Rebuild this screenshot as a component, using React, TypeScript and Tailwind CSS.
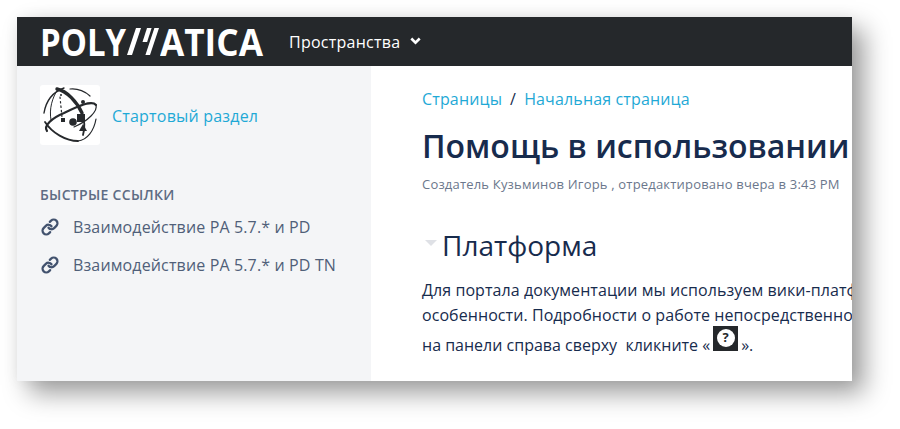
import { Link as LinkIcon } from "lucide-react";

function Logo() {
  return (
    <div className="flex h-[30px] w-[223px] items-center text-[37px] font-bold leading-none text-white font-['Open_Sans',sans-serif]">
      <div className="w-[86px]">
        <span className="inline-block origin-left scale-x-[0.89]">POLY</span>
      </div>
      <svg width="34" height="27" viewBox="0 0 34 27" className="shrink-0">
        <path d="M10 0h5L6 27H1z" fill="#fff" />
        <path d="M21 0h4.6l-4.5 14h-4.6z" fill="#fff" />
        <path d="M28.4 0h4.6l-9 27h-4.6z" fill="#fff" />
      </svg>
      <div className="w-[103px]">
        <span className="inline-block origin-left scale-x-[0.95]">ATICA</span>
      </div>
    </div>
  );
}

function SpaceIcon() {
  return (
    <div className="flex h-[60px] w-[60px] items-center justify-center rounded-[3px] bg-white">
      <svg width="60" height="60" viewBox="0 0 60 60" fill="none" stroke="#26292c" strokeLinecap="round">
        <path d="M4 28C6 16 13 7 24 3" strokeWidth="1.4" />
        <path d="M17 4C27 6 37 17 42 28" strokeWidth="3.4" />
        <path d="M42 28C45 36 45 43 43 50" strokeWidth="1.8" />
        <path d="M18 4C12 13 9 24 11 35" strokeWidth="1" />
        <path d="M7 46C3 41 12 33 24 28C38 21 52 15 56 20" strokeWidth="2.2" />
        <path d="M56 20C58 26 48 36 34 42" strokeWidth="1.2" />
        <path d="M5 37C12 48 26 56 38 56" strokeWidth="1.8" />
        <path d="M38 56C47 55 54 46 56 34" strokeWidth="1.2" />
        <path d="M30 4C38 3 46 7 50 11" strokeWidth="1.2" />
        <path d="M20 12L22 32" strokeWidth="1.2" strokeDasharray="1.5 3" />
        <circle cx="33" cy="37" r="3.8" fill="#26292c" stroke="none" />
        <rect x="37" y="29" width="8" height="8" fill="#26292c" stroke="none" />
        <path d="M43 39l4 7h-8z" fill="#26292c" stroke="none" />
        <rect x="21" y="33" width="4" height="4" fill="#26292c" stroke="none" />
        <circle cx="43" cy="17" r="2" fill="#26292c" stroke="none" />
        <circle cx="21" cy="10" r="1" fill="#26292c" stroke="none" />
      </svg>
    </div>
  );
}

function QuickLink({ children }: { children: string }) {
  return (
    <div className="flex h-[38px] items-center">
      <LinkIcon size={18} strokeWidth={3} className="ml-[1px] text-[#42526e]" />
      <span className="ml-[14px] text-[16px] tracking-[0.14px] text-[#505f79]">{children}</span>
    </div>
  );
}

export default function App() {
  return (
    <div className="h-[429px] w-[900px] overflow-hidden bg-white pl-[17px] pt-[17px] font-['Open_Sans',sans-serif]">
      <div className="flex h-[364px] w-[835px] flex-col shadow-[12px_12px_24px_rgba(0,0,0,0.39),0_0_14px_rgba(0,0,0,0.05)]">
        <header className="flex h-[49px] shrink-0 items-center bg-[#25282b] pl-[23px]">
          <Logo />
          <nav className="ml-[26px] flex items-center text-[16px] tracking-[0.25px] text-white">
            Пространства
            <svg width="11" height="8" viewBox="0 0 11 8" fill="none" className="-mt-[2px] ml-[10px]">
              <path d="M1.3 1.5l4.2 4.2 4.2-4.2" stroke="#fff" strokeWidth="2.6" />
            </svg>
          </nav>
        </header>
        <div className="flex min-h-0 flex-1">
          <aside className="w-[354px] shrink-0 bg-[#f4f5f7] pl-[23px] pt-[19px]">
            <div className="flex items-center">
              <SpaceIcon />
              <a className="ml-[12px] mt-[1px] text-[16px] tracking-[0.2px] text-[#1fa9d6]">Стартовый раздел</a>
            </div>
            <h3 className="mt-[39px] text-[14px] font-semibold tracking-[0.3px] text-[#5e6c84]">БЫСТРЫЕ ССЫЛКИ</h3>
            <div className="mt-[3px]">
              <QuickLink>Взаимодействие PA 5.7.* и PD</QuickLink>
              <QuickLink>Взаимодействие PA 5.7.* и PD TN</QuickLink>
            </div>
          </aside>
          <main className="min-w-0 flex-1 overflow-hidden whitespace-nowrap bg-white pl-[51px] pt-[22px]">
            <div className="flex items-center text-[16px] leading-[22px] tracking-[0.15px] text-[#1fa9d6]">
              <a>Страницы</a>
              <span className="mx-[8px] text-[#172b4d]">/</span>
              <a>Начальная страница</a>
            </div>
            <h1 className="mt-[16px] text-[32px] font-semibold leading-[40px] text-[#172b4d]">
              Помощь в использовании
            </h1>
            <p className="mt-[9px] text-[13px] leading-[18px] tracking-[0.19px] text-[#6b778c]">
              Создатель Кузьминов Игорь , отредактировано вчера в 3:43 PM
            </p>
            <div className="mt-[34px] flex items-center">
              <span className="mt-[-4px] ml-[3px] h-0 w-0 border-x-[6px] border-t-[6px] border-x-transparent border-t-[#dfe1e6]" />
              <h2 className="ml-[5px] text-[28px] leading-[36px] text-[#172b4d]">Платформа</h2>
            </div>
            <p className="mt-[15px] text-[16px] leading-[25px] tracking-[0.07px] text-[#172b4d]">
              Для портала документации мы используем вики-платформу Confluence
              <br />
              особенности. Подробности о работе непосредственно с платформой
            </p>
            <p className="mt-[2px] flex items-center text-[16px] leading-[30px] text-[#172b4d]">
              <span>на панели справа сверху&nbsp; кликните «</span>
              <span className="ml-[3px] flex h-[25px] w-[25px] -translate-y-[7px] items-center justify-center bg-[#25282b]">
                <span className="-mt-[1px] flex h-[18px] w-[18px] items-center justify-center rounded-full bg-white text-[13px] font-bold leading-none text-[#25282b]">
                  ?
                </span>
              </span>
              <span className="ml-[3px]">».</span>
            </p>
          </main>
        </div>
      </div>
    </div>
  );
}
